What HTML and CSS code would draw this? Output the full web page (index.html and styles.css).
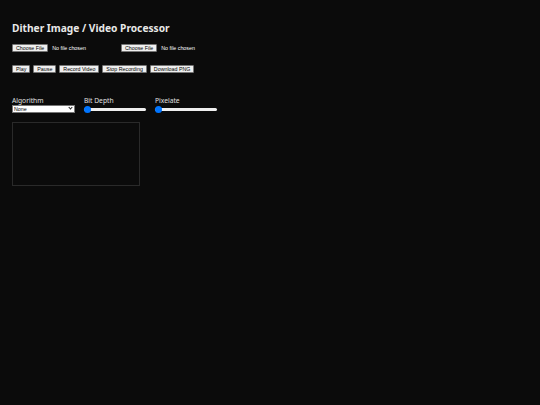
FILE: index.html
```
<!DOCTYPE html>
<html lang="en">
<head>
    <meta charset="UTF-8">
    <meta name="viewport" content="width=device-width, initial-scale=1.0">
    <title>Dither Image / Video Processor</title>
    <link rel="stylesheet" href="styles.css">
</head>
<body>

    <h1>Dither Image / Video Processor</h1>

    <div class="row files">
        <input type="file" id="imageInput" accept="image/*">
        <input type="file" id="videoInput" accept="video/*">
    </div>

    <div class="row actions">
        <button id="playBtn">Play</button>
        <button id="pauseBtn">Pause</button>
        <button id="recordBtn">Record Video</button>
        <button id="stopBtn">Stop Recording</button>
        <button id="downloadBtn">Download PNG</button>
    </div>

    <div class="row controls">
        <div class="control">
            <label for="algorithm">Algorithm</label>
            <div class="select-wrap">
                <select id="algorithm">
                    <option>None</option>
                    <option>Floyd-Steinberg</option>
                    <option>Atkinson</option>
                    <option>Ordered (Bayer)</option>
                </select>
            </div>
        </div>
        <div class="control">
            <label for="bitDepth">Bit Depth</label>
            <input type="range" id="bitDepth" min="1" max="8" value="1">
        </div>
        <div class="control">
            <label for="pixelate">Pixelate</label>
            <input type="range" id="pixelate" min="1" max="32" value="1">
        </div>
    </div>

    <canvas id="output" class="output" width="126" height="62"></canvas>

</body>
</html>
```

FILE: styles.css
```
body {
    margin: 0;
    padding: 12px;
    background-color: #0b0b0b;
    color: #e8e8e8;
    font-family: "Noto Sans", Arial, sans-serif;
}

h1 {
    margin: 9px 0 9px;
    font-size: 10.2px;
    font-weight: bold;
}

.row {
    display: flex;
    align-items: center;
}

.files {
    gap: 8px;
}

input[type="file"] {
    font-family: Arial, sans-serif;
    font-size: 5.3px;
    color: #fff;
}

.actions {
    gap: 3px;
    margin-top: 13px;
}

button,
input[type="file"]::file-selector-button {
    font-family: Arial, sans-serif;
    font-size: 5.3px;
    padding: 0 3px;
    background-color: #efefef;
    color: #000;
    border: 1px solid #767676;
    border-radius: 1px;
}

.controls {
    gap: 9px;
    margin-top: 24px;
    align-items: flex-start;
}

.control {
    display: flex;
    flex-direction: column;
}

.control label {
    font-size: 6.7px;
    line-height: 8px;
    color: #e0e0e0;
}

.select-wrap {
    position: relative;
    width: 63px;
}

/* small chevron in place of the native arrow */
.select-wrap::after {
    content: "";
    position: absolute;
    right: 3px;
    top: 1px;
    width: 2px;
    height: 2px;
    border-right: 1px solid #222;
    border-bottom: 1px solid #222;
    transform: rotate(45deg);
    pointer-events: none;
}

select {
    -webkit-appearance: none;
    appearance: none;
    display: block;
    width: 63px;
    height: 8px;
    font-family: Arial, sans-serif;
    font-size: 5.3px;
    line-height: 6px;
    padding: 0 0 0 1px;
    border: 1px solid #767676;
    border-radius: 0;
    background-color: #fff;
    color: #000;
}

input[type="range"] {
    -webkit-appearance: none;
    appearance: none;
    width: 62px;
    height: 8px;
    margin: 0;
    background: transparent;
}

input[type="range"]::-webkit-slider-runnable-track {
    height: 3px;
    border-radius: 2px;
    background-color: #efefef;
}

input[type="range"]::-webkit-slider-thumb {
    -webkit-appearance: none;
    width: 7px;
    height: 7px;
    margin-top: -2px;
    border-radius: 50%;
    background-color: #0075ff;
}

.output {
    display: block;
    margin-top: 9px;
    border: 1px solid #2a2a2a;
}
```
